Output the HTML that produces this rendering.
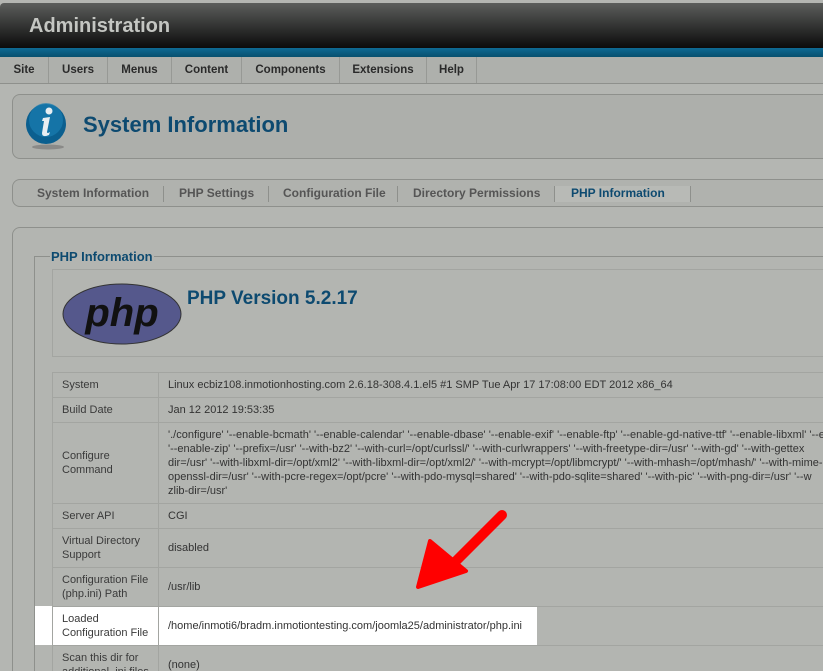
<!DOCTYPE html>
<html style="width:823px;height:671px;overflow:hidden"><head><meta charset="utf-8"><style>
*{box-sizing:border-box;margin:0;padding:0}
body{width:823px;height:671px;overflow:hidden;background:#b4b6b2;font-family:"Liberation Sans",Arial,sans-serif;position:relative}
.abs{position:absolute}
#hdr{left:0;top:3px;width:823px;height:45px;background:linear-gradient(#5c5e5c,#0b0b0b);border-radius:4px 0 0 0}
#hdr span{position:absolute;left:29px;top:12px;color:#c4c6c2;font-size:20px;font-weight:bold}
#blue{left:0;top:48px;width:823px;height:9px;background:linear-gradient(#0e6a94,#07506f)}
#menu{left:0;top:57px;width:823px;height:27px;background:#aeb0ac;border-bottom:1px solid #8e908c;display:flex}
#menu div{border-right:1px solid #979995;font-size:11.5px;font-weight:bold;color:#2a2a2a;line-height:26px;text-align:center}
.box{border:1px solid #8e908c;border-radius:8px;border-right:none;border-top-right-radius:0;border-bottom-right-radius:0}
#title{left:12px;top:94px;width:811px;height:65px;background:#adafab}
#title span{position:absolute;left:70px;top:17px;font-size:22px;font-weight:bold;color:#0d4a70}
#tabs{left:12px;top:179px;width:811px;height:28px;background:#b0b2ae;font-size:12px;font-weight:bold;color:#555}
#tabs span{position:absolute;top:6px}
.sep{position:absolute;top:6px;width:1px;height:16px;background:#8e908c}
#panel{left:12px;top:227px;width:811px;height:460px;background:#b3b5b1}
#fs{left:34px;top:256px;width:789px;height:430px;border-left:1px solid #8e908c;border-top:1px solid #8e908c}
#fsl{left:50px;top:249px;background:#b3b5b1;padding:0 1px;color:#0d4a70;font-size:13px;font-weight:bold}
#info{left:52px;top:269px;width:771px;height:88px;border:1px solid #a3a5a1;border-right:none}
table{position:absolute;left:52px;top:372px;border-collapse:collapse;font-size:11px;color:#333;width:900px}
td{border:1px solid #a3a5a1;padding:0 9px;vertical-align:middle;line-height:14px}
td.l{width:106px;color:#3a3a3a}
</style></head><body>
<div id="hdr" class="abs"><span>Administration</span></div>
<div id="blue" class="abs"></div>
<div id="menu" class="abs">
<div style="width:49px">Site</div><div style="width:59px">Users</div><div style="width:64px">Menus</div><div style="width:70px">Content</div><div style="width:98px">Components</div><div style="width:87px">Extensions</div><div style="width:50px">Help</div>
</div>
<div id="title" class="abs box">
<svg style="position:absolute;left:13px;top:7px" width="46" height="50" viewBox="0 0 46 50">
<ellipse cx="22" cy="45" rx="16" ry="2.5" fill="#8a8a88"/>
<circle cx="20" cy="22" r="20" fill="#0b5f8f"/>
<circle cx="20" cy="18" r="17" fill="#1a7db0" opacity=".7"/>
<circle cx="23" cy="9" r="3.5" fill="#e8eef2"/>
<path d="M17 16 L24 15 L21 30 Q21 32 24 30 L23 33 Q16 36 16 31 L18 19 L16 19Z" fill="#e8eef2"/>
</svg>
<span>System Information</span></div>
<div id="tabs" class="abs box">
<span style="left:24px">System Information</span><div class="sep" style="left:150px"></div>
<span style="left:166px">PHP Settings</span><div class="sep" style="left:255px"></div>
<span style="left:270px">Configuration File</span><div class="sep" style="left:384px"></div>
<span style="left:400px">Directory Permissions</span><div class="sep" style="left:541px"></div>
<div style="position:absolute;left:542px;top:6px;width:135px;height:16px;background:#b8bab6"></div>
<span style="left:558px;color:#0d4a70">PHP Information</span><div class="sep" style="left:677px"></div>
</div>
<div id="panel" class="abs box"></div>
<div id="fs" class="abs"></div>
<div id="fsl" class="abs">PHP Information</div>
<div id="info" class="abs">
<svg style="position:absolute;left:8px;top:13px" width="122" height="62" viewBox="0 0 122 62">
<ellipse cx="61" cy="31" rx="59" ry="30" fill="#55588c" stroke="#333" stroke-width="1"/>
<text x="61" y="43" text-anchor="middle" font-family="Liberation Sans,sans-serif" font-size="40" font-weight="bold" font-style="italic" fill="#111">php</text>
</svg>
<div style="position:absolute;left:134px;top:18px;font-size:19px;font-weight:bold;color:#0d4a70">PHP Version 5.2.17</div>
</div>
<div class="abs" style="left:35px;top:606px;width:502px;height:39px;background:#fff"></div>
<table>
<tr style="height:25px"><td class="l">System</td><td>Linux ecbiz108.inmotionhosting.com 2.6.18-308.4.1.el5 #1 SMP Tue Apr 17 17:08:00 EDT 2012 x86_64</td></tr>
<tr style="height:25px"><td class="l">Build Date</td><td>Jan 12 2012 19:53:35</td></tr>
<tr style="height:81px"><td class="l">Configure Command</td><td style="white-space:nowrap">'./configure' '--enable-bcmath' '--enable-calendar' '--enable-dbase' '--enable-exif' '--enable-ftp' '--enable-gd-native-ttf' '--enable-libxml' '--e<br>'--enable-zip' '--prefix=/usr' '--with-bz2' '--with-curl=/opt/curlssl/' '--with-curlwrappers' '--with-freetype-dir=/usr' '--with-gd' '--with-gettex<br>dir=/usr' '--with-libxml-dir=/opt/xml2' '--with-libxml-dir=/opt/xml2/' '--with-mcrypt=/opt/libmcrypt/' '--with-mhash=/opt/mhash/' '--with-mime-m<br>openssl-dir=/usr' '--with-pcre-regex=/opt/pcre' '--with-pdo-mysql=shared' '--with-pdo-sqlite=shared' '--with-pic' '--with-png-dir=/usr' '--w<br>zlib-dir=/usr'</td></tr>
<tr style="height:25px"><td class="l">Server API</td><td>CGI</td></tr>
<tr style="height:39px"><td class="l">Virtual Directory Support</td><td>disabled</td></tr>
<tr style="height:39px"><td class="l">Configuration File (php.ini) Path</td><td>/usr/lib</td></tr>
<tr style="height:39px"><td class="l" style="background:#fff">Loaded Configuration File</td><td>/home/inmoti6/bradm.inmotiontesting.com/joomla25/administrator/php.ini</td></tr>
<tr style="height:39px"><td class="l">Scan this dir for additional .ini files</td><td>(none)</td></tr>
</table>
<svg class="abs" style="left:410px;top:505px" width="100" height="90" viewBox="0 0 100 90">
<path d="M92 10 L42 60" stroke="#ff0000" stroke-width="10" stroke-linecap="round"/>
<path d="M8 82 L20 36 L56 66Z" fill="#ff0000" stroke="#ff0000" stroke-width="4" stroke-linejoin="round"/>
</svg>
</body></html>
